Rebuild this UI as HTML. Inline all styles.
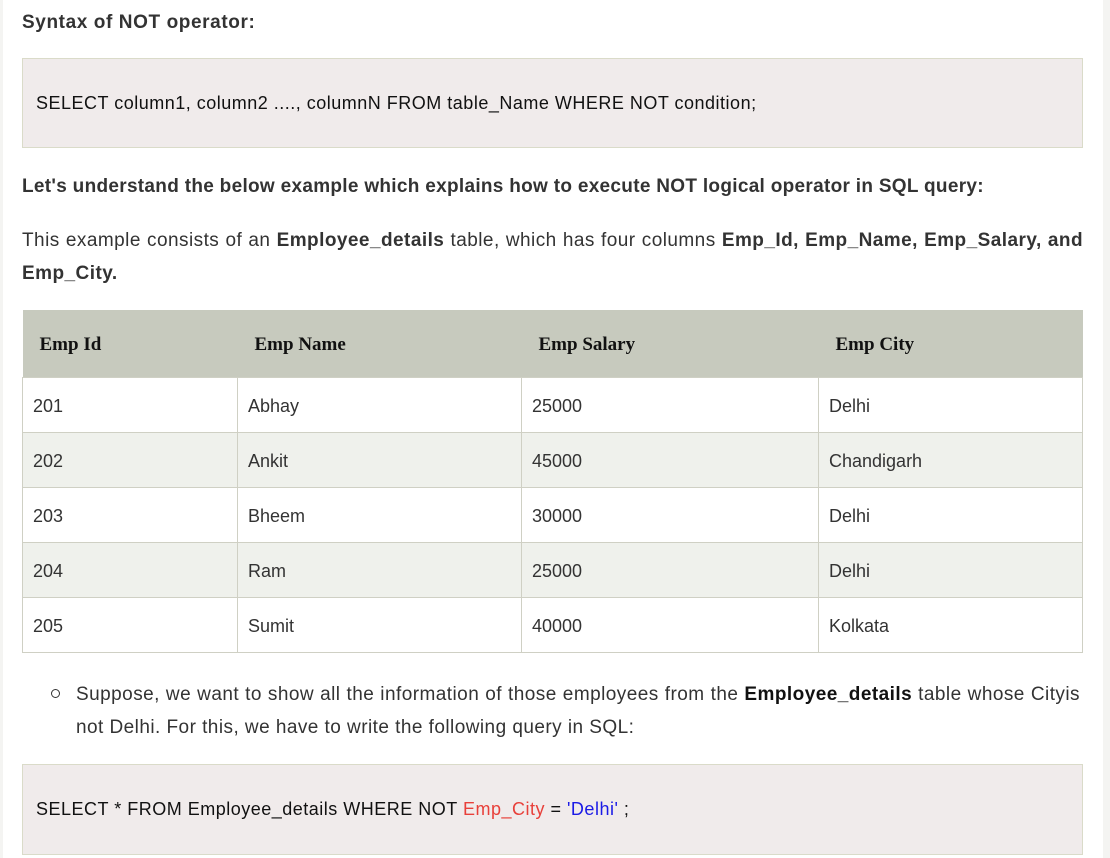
<!DOCTYPE html>
<html><head><style>
body{margin:0;width:1110px;height:858px;background:#fff;position:relative;overflow:hidden;font-family:"Liberation Sans",sans-serif;color:#333;}
.ls{position:absolute;left:0;top:0;width:3px;height:858px;background:#f4f4f2}
.rs{position:absolute;right:0;top:0;width:7px;height:858px;background:#f4f4f2}
.t{position:absolute;left:22px;width:1061px;font-size:19px;line-height:33px;letter-spacing:0.45px}
.code{position:absolute;left:22px;width:1061px;background:#f0ebeb;border:1px solid #dadbc9;box-sizing:border-box;font-size:18px;letter-spacing:0.5px;color:#111;padding-left:13px}
table{position:absolute;left:22px;top:310px;width:1061px;border-collapse:collapse;font-size:18px}
th{background:#c7cabe;height:65px;text-align:left;font-family:"Liberation Serif",serif;font-size:19px;color:#111;padding:2px 0 0 17px}
td{height:52px;border:1px solid #cfd0c4;padding:2px 0 0 10px;color:#333}
tr.a td{background:#eff1ec}
</style></head><body>
<div class="ls"></div><div class="rs"></div>
<div class="t" style="top:6px;font-weight:bold;letter-spacing:0.6px">Syntax of NOT operator:</div>
<div class="code" style="top:58px;height:90px;line-height:88px">SELECT column1, column2 ...., columnN FROM table_Name WHERE NOT condition;</div>
<div class="t" style="top:170px;font-weight:bold;letter-spacing:0.3px">Let's understand the below example which explains how to execute NOT logical operator in SQL query:</div>
<div class="t" style="top:224px;text-align:justify;text-align-last:left">This example consists of an <b>Employee_details</b> table, which has four columns <b>Emp_Id, Emp_Name, Emp_Salary, and Emp_City.</b></div>
<table>
<tr><th style="width:198px">Emp Id</th><th style="width:267px">Emp Name</th><th style="width:280px">Emp Salary</th><th>Emp City</th></tr>
<tr><td>201</td><td>Abhay</td><td>25000</td><td>Delhi</td></tr>
<tr class="a"><td>202</td><td>Ankit</td><td>45000</td><td>Chandigarh</td></tr>
<tr><td>203</td><td>Bheem</td><td>30000</td><td>Delhi</td></tr>
<tr class="a"><td>204</td><td>Ram</td><td>25000</td><td>Delhi</td></tr>
<tr><td>205</td><td>Sumit</td><td>40000</td><td>Kolkata</td></tr>
</table>
<div style="position:absolute;left:51px;top:689px;width:9px;height:9px;border:1.5px solid #333;border-radius:50%;box-sizing:border-box"></div>
<div class="t" style="left:76px;width:1004px;top:678px;text-align:justify;text-align-last:left">Suppose, we want to show all the information of those employees from the <b style="color:#111">Employee_details</b> table whose Cityis not Delhi. For this, we have to write the following query in SQL:</div>
<div class="code" style="top:764px;height:91px;line-height:89px">SELECT * FROM Employee_details WHERE NOT <span style="color:#e8403a">Emp_City</span> = <span style="color:#1a1ae6">'Delhi'</span> ;</div>
</body></html>
